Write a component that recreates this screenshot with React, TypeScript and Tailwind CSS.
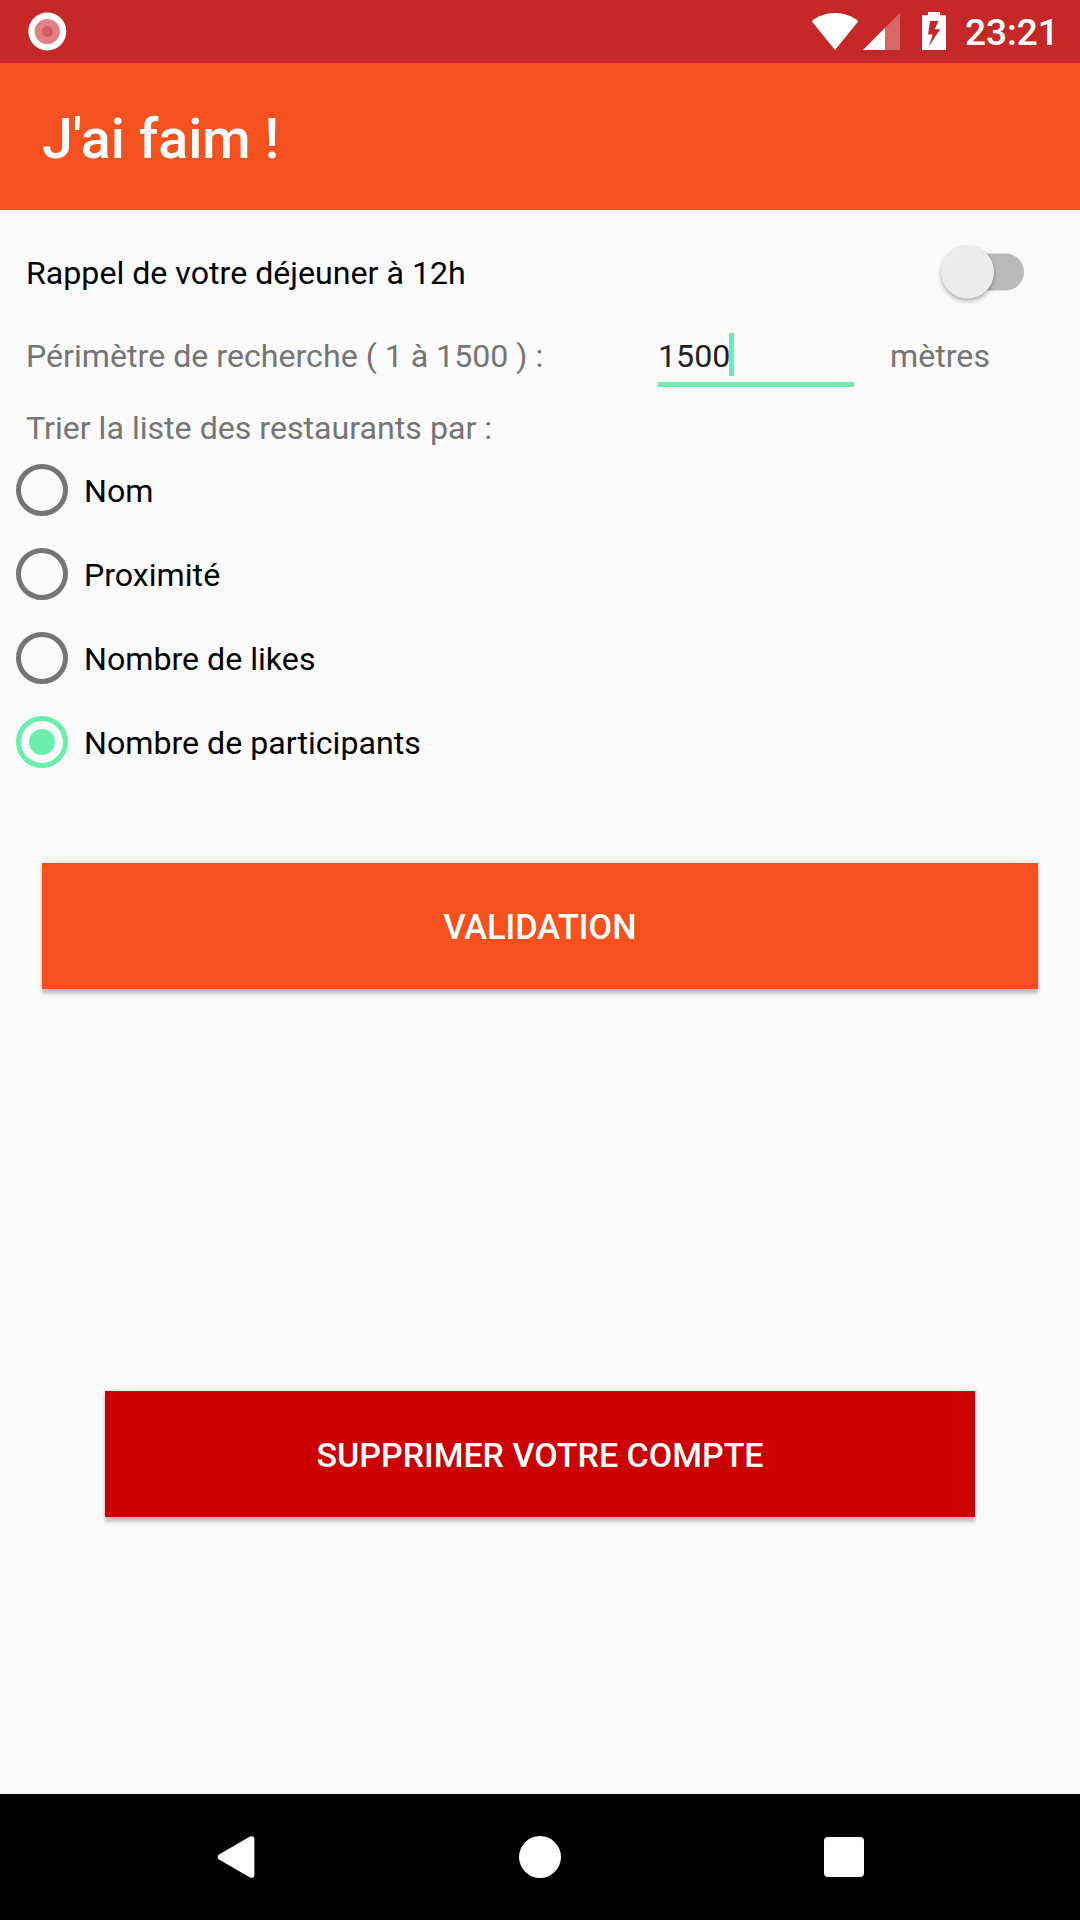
import React from "react";

const options = ["Nom", "Proximité", "Nombre de likes", "Nombre de participants"];
const selected = 3;

function StatusBar() {
  return (
    <header className="flex h-[63px] items-start bg-[#c62828]">
      <svg className="ml-7 mt-3 h-10 w-10" viewBox="28 12 40 40">
        <circle cx="47.3" cy="31.5" r="19" fill="#fff" />
        <circle cx="47.3" cy="31.5" r="12.6" fill="#e08285" />
        <circle cx="47.3" cy="31.5" r="5.6" fill="#d65c60" />
      </svg>
      <svg className="ml-auto h-[63px] w-[150px]" viewBox="810 0 150 63">
        <path d="M835 50 811.7 21.2C818 16 826 13 835 13s17 3 23.3 8.2Z" fill="#fff" />
        <path d="M900 13v37h-37Z" fill="#fff" fillOpacity=".3" />
        <path d="M885 28v22h-22Z" fill="#fff" />
        <path
          fillRule="evenodd"
          d="M928 12h12v3.3h6V50h-24V15.3h6ZM930 21l-1.9 13.5h4.6L928.8 46.5 940.2 29.2h-5.4l3.6-8.2Z"
          fill="#fff"
        />
      </svg>
      <span className="mt-[10px] w-[120px] pl-[5px] text-[37px] leading-[46px] font-medium text-white">23:21</span>
    </header>
  );
}

function Radio({ checked }: { checked: boolean }) {
  return checked ? (
    <span className="flex h-[52px] w-[52px] items-center justify-center rounded-full border-[5px] border-[#69f0ae]">
      <span className="h-[26px] w-[26px] rounded-full bg-[#69f0ae]" />
    </span>
  ) : (
    <span className="h-[52px] w-[52px] rounded-full border-[5px] border-[#757575]" />
  );
}

export default function App() {
  return (
    <div className="flex h-[1920px] w-[1080px] flex-col overflow-hidden bg-[#fafafa] font-[Roboto,sans-serif] text-[32.15px] leading-[42px] whitespace-nowrap">
      <StatusBar />
      <div className="flex h-[147px] items-center bg-[#f4511e] pl-[42px] pt-[7px]">
        <h1 className="text-[55.5px] leading-[64px] font-medium text-white">J'ai faim !</h1>
      </div>

      <main className="flex flex-1 flex-col pt-[31px]">
        <div className="flex h-16 items-center pl-[26px] pr-14 text-black">
          <span>Rappel de votre déjeuner à 12h</span>
          <span className="relative ml-auto flex h-[37px] w-[80px] -translate-y-[1.5px] items-center rounded-full bg-[#b9b9b9]">
            <span className="absolute -left-[3px] h-[53px] w-[53px] rounded-full bg-[#ececec] shadow-[0_3px_4px_rgba(0,0,0,0.26),0_0_2px_rgba(0,0,0,0.1)]" />
          </span>
        </div>
        <div className="flex h-[102px] items-start pt-[28px] text-[#757575]">
          <span className="w-[658px] pl-[26px] pt-[2px]">Périmètre de recherche ( 1 à 1500 ) :</span>
          <span className="flex h-[54px] w-[196px] items-start border-b-[5px] border-[#69f0ae]">
            <span className="w-[71px] pt-[2px] text-[#212121]">1500</span>
            <span className="h-[43px] w-[5px] bg-[#69f0ae]" />
          </span>
          <span className="pl-[36px] pt-[2px]">mètres</span>
        </div>
        <div className="h-[41px] pl-[26px] text-[#757575]">Trier la liste des restaurants par :</div>
        <div className="flex flex-col pl-4">
          {options.map((label, i) => (
            <label key={label} className="flex h-[84px] items-center gap-4 text-black">
              <Radio checked={i === selected} />
              <span className="pt-[2px]">{label}</span>
            </label>
          ))}
        </div>
        <button className="mx-[42px] mt-[79px] h-[126px] bg-[#f4511e] pt-[2px] text-[34.3px] font-medium text-white shadow-[0_5px_3px_rgba(0,0,0,0.2),0_0_4px_rgba(0,0,0,0.16)]">
          VALIDATION
        </button>
        <button className="mx-[105px] mt-[402px] h-[126px] bg-[#cc0000] pt-[2px] text-[34px] font-medium text-white shadow-[0_5px_3px_rgba(0,0,0,0.2),0_0_4px_rgba(0,0,0,0.16)]">
          SUPPRIMER VOTRE COMPTE
        </button>
      </main>

      <nav className="flex h-[126px] items-center justify-between bg-black pl-[217px] pr-[216px]">
        <svg className="h-[42px] w-[38px]" viewBox="0 0 38 42">
          <path d="M1.6 18.8 33 .6Q37.4-.8 37.4 3.5v35Q37.4 42.8 33 41.4L1.6 23.2Q-.4 21 1.6 18.8Z" fill="#fff" />
        </svg>
        <span className="h-[42px] w-[42px] rounded-full bg-white" />
        <span className="h-10 w-10 rounded-[4px] bg-white" />
      </nav>
    </div>
  );
}
